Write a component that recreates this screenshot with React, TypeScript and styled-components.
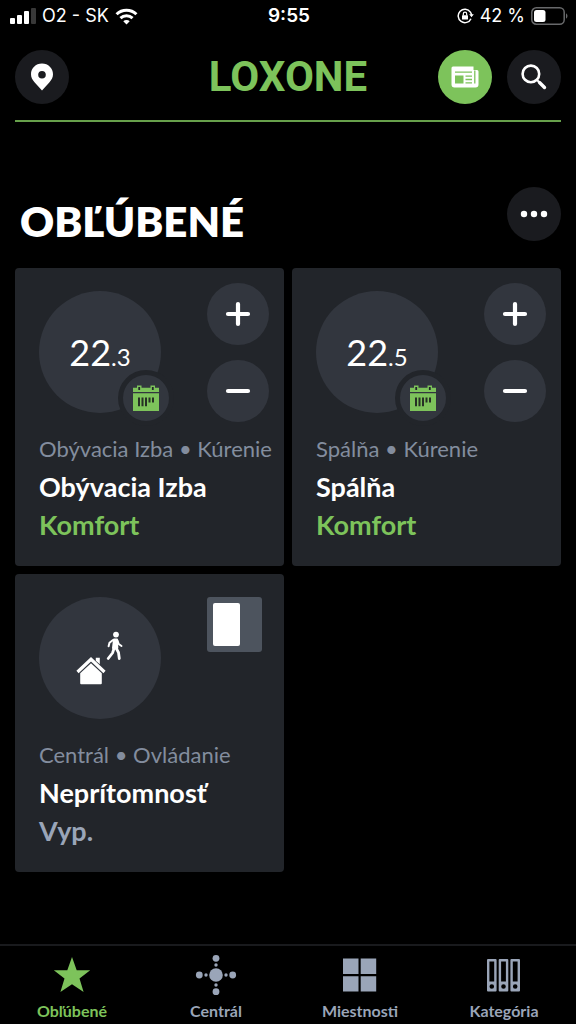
import React from "react";
import styled, { createGlobalStyle } from "styled-components";

const green = "#7dc35b";
const slate = "#9aa5b8";

const GlobalStyle = createGlobalStyle`
  * { box-sizing: border-box; }
  body { margin: 0; background: #000; color: #fff; font-family: Lato, "Open Sans", sans-serif; }
  button { border: 0; padding: 0; font: inherit; color: inherit; cursor: pointer; }
  svg { display: block; flex: none; }
  h1, h2, p { margin: 0; }
`;

const Screen = styled.div`
  min-height: 100vh;
  display: flex;
  flex-direction: column;
`;

const StatusBar = styled.div`
  display: grid;
  grid-template-columns: 1fr auto 1fr;
  align-items: center;
  height: 32px;
  padding: 0 8px 0 10px;
  font-family: Inter, sans-serif;
  font-size: 18px;
  line-height: 24px;
`;

const StatusGroup = styled.div<{ $end?: boolean }>`
  display: flex;
  align-items: center;
  gap: 6px;
  white-space: nowrap;
  justify-content: ${(p) => (p.$end ? "flex-end" : "flex-start")};
`;

const Clock = styled.time`
  font-size: 19px;
  font-weight: 600;
`;

const Header = styled.header`
  display: grid;
  grid-template-columns: 1fr auto 1fr;
  align-items: center;
  margin: 18px 15px 0;
  padding-bottom: 16px;
  border-bottom: 2px solid #67a04b;
`;

const HeaderActions = styled.div`
  display: flex;
  justify-content: flex-end;
  gap: 15px;
`;

const Logo = styled.a`
  color: ${green};
  font-family: "Liberation Sans Narrow", Roboto, sans-serif;
  font-size: 42px;
  font-weight: 700;
  line-height: 54px;
  text-decoration: none;
`;

const RoundButton = styled.button<{ $size: number; $tone: string }>`
  display: flex;
  align-items: center;
  justify-content: center;
  flex: none;
  width: ${(p) => p.$size}px;
  height: ${(p) => p.$size}px;
  border-radius: 50%;
  background: ${(p) => p.$tone};
`;

const Main = styled.main`
  flex: 1;
  padding: 65px 15px 24px;
`;

const TitleRow = styled.div`
  display: flex;
  justify-content: space-between;
  padding-left: 5px;
  margin-bottom: 24px;
`;

const Title = styled.h1`
  padding-top: 11px;
  font-size: 42px;
  font-weight: 800;
  line-height: 46px;
`;

const Cards = styled.div`
  display: grid;
  grid-template-columns: repeat(2, minmax(0, 1fr));
  gap: 8px;
`;

const Card = styled.article`
  padding: 15px 0 22px 24px;
  border-radius: 4px;
  background: #22252a;
`;

const CardTop = styled.div`
  display: flex;
  justify-content: space-between;
  height: 147px;
  padding-right: 15px;
`;

const Dial = styled.div`
  position: relative;
  display: flex;
  align-items: center;
  justify-content: center;
  width: 122px;
  height: 122px;
  margin-top: 8px;
  border-radius: 50%;
  background: #32363e;
`;

const Reading = styled.span`
  padding-top: 4px;
  font-size: 36px;
  line-height: 44px;
`;

const Fraction = styled.span`
  font-size: 24px;
`;

const Badge = styled.span`
  position: absolute;
  right: -13px;
  bottom: -13px;
  display: flex;
  align-items: center;
  justify-content: center;
  width: 56px;
  height: 56px;
  border: 5px solid #22252a;
  border-radius: 50%;
  background: #32363e;
`;

const Stepper = styled.div`
  display: flex;
  flex-direction: column;
  gap: 15px;
`;

const Switch = styled.input`
  appearance: none;
  width: 55px;
  height: 55px;
  margin: 8px 7px 0 0;
  padding: 6px;
  border-radius: 3px;
  background: #4d545e;
  cursor: pointer;

  &::before {
    content: "";
    display: block;
    width: 27px;
    height: 43px;
    border-radius: 2px;
    background: #fff;
  }

  &:checked::before {
    margin-left: auto;
  }
`;

const Place = styled.p`
  color: #838d9e;
  font-size: 22px;
  line-height: 38px;
  white-space: nowrap;
`;

const Name = styled.h2`
  font-size: 27px;
  font-weight: 700;
  line-height: 38px;
`;

const State = styled.p<{ $active?: boolean }>`
  color: ${(p) => (p.$active ? green : slate)};
  font-size: 27px;
  font-weight: 700;
  line-height: 38px;
`;

const TabBar = styled.nav`
  display: grid;
  grid-template-columns: repeat(4, 1fr);
  height: 80px;
  border-top: 2px solid #191a1d;
`;

const Tab = styled.a<{ $active?: boolean }>`
  display: flex;
  flex-direction: column;
  align-items: center;
  gap: 5px;
  padding-top: 8px;
  color: ${(p) => (p.$active ? green : slate)};
  font-size: 16px;
  font-weight: 700;
  line-height: 20px;
  text-decoration: none;
`;

const SignalIcon = () => (
  <svg width="26" height="16" viewBox="0 0 26 16" fill="#fff" aria-hidden="true">
    <rect y="10" width="5" height="6" rx="1" />
    <rect x="7" y="7" width="5" height="9" rx="1" />
    <rect x="14" y="3" width="5" height="13" rx="1" />
    <rect x="21" width="5" height="16" rx="1" opacity=".22" />
  </svg>
);

const WifiIcon = () => (
  <svg width="23" height="17" viewBox="0 0 24 18" fill="none" stroke="#fff" strokeWidth="3.2" aria-hidden="true">
    <path d="M1.500 6.600a15 15 0 0 1 21 0" />
    <path d="M5.600 10.700a9.200 9.200 0 0 1 12.800 0" />
    <path d="M12 17.400 8.600 14a4.800 4.800 0 0 1 6.800 0z" fill="#fff" stroke="none" />
  </svg>
);

const RotationLockIcon = () => (
  <svg width="17" height="16" viewBox="0 0 17 16" fill="none" stroke="#fff" strokeWidth="1.5" aria-hidden="true">
    <path d="M13.4 4.1A6.700 6.700 0 1 0 14 10.700M14.600 7.500A6.700 6.700 0 0 0 13.400 4.100" />
    <path d="M12.200 6.200h4.600l-2.300 3z" fill="#fff" stroke="none" />
    <rect x="5" y="7.200" width="6" height="4.400" rx=".6" fill="#fff" stroke="none" />
    <path d="M6.300 7.400V5.900a1.700 1.700 0 0 1 3.400 0v1.500" strokeWidth="1.200" />
  </svg>
);

const BatteryIcon = () => (
  <svg width="37" height="18" viewBox="0 0 37 18" aria-hidden="true">
    <rect x=".8" y=".8" width="32.400" height="16.400" rx="4.500" fill="none" stroke="#68696b" strokeWidth="1.500" />
    <rect x="3" y="3" width="11.500" height="12" rx="2.500" fill="#fff" />
    <path d="M35 6.300a3.200 3.200 0 0 1 0 5.400z" fill="#68696b" />
  </svg>
);

const PinIcon = () => (
  <svg width="24" height="28" viewBox="0 0 24 28" aria-hidden="true">
    <path fillRule="evenodd" fill="#fff" d="M12 .5C5.700.5 1 5.300 1 11.300c0 3.200 1.300 5.400 3.500 8L12 27.500l7.500-8.200c2.200-2.600 3.500-4.800 3.500-8C23 5.300 18.300.5 12 .5zm0 7.500a3.800 3.800 0 1 1 0 7.600 3.800 3.800 0 0 1 0-7.600z" />
  </svg>
);

const NewsIcon = () => (
  <svg width="28" height="22" viewBox="0 0 28 22" aria-hidden="true">
    <path fill="#fff" d="M2 .5h20.500V4H26a1.500 1.500 0 0 1 1.500 1.500V18.500a3 3 0 0 1-3 3H3.500a3 3 0 0 1-3-3V2A1.500 1.500 0 0 1 2 .5z" />
    <path d="M4 6.200h17M14.500 10.200h6.500M14.500 13.500h6.500M14.500 16.800h6.500M23.800 4.500v13" stroke={green} strokeWidth="1.300" />
    <rect x="4" y="9.500" width="8.500" height="8" fill={green} />
  </svg>
);

const SearchIcon = () => (
  <svg width="26" height="26" viewBox="0 0 26 26" fill="none" stroke="#fff" strokeLinecap="round" aria-hidden="true">
    <circle cx="9.900" cy="9.900" r="8.300" strokeWidth="2.600" />
    <path d="m16 16 1.800 1.800" strokeWidth="2" />
    <path d="m18.500 18.500 5 5" strokeWidth="3.400" />
  </svg>
);

const MoreIcon = () => (
  <svg width="28" height="8" viewBox="0 0 28 8" fill="#fff" aria-hidden="true">
    <circle cx="4" cy="4" r="3.200" />
    <circle cx="14" cy="4" r="3.200" />
    <circle cx="24" cy="4" r="3.200" />
  </svg>
);

const PlusIcon = () => (
  <svg width="26" height="26" viewBox="0 0 26 26" stroke="#fff" strokeWidth="4.200" strokeLinecap="round" aria-hidden="true">
    <path d="M3 13h20M13 3v20" />
  </svg>
);

const MinusIcon = () => (
  <svg width="26" height="26" viewBox="0 0 26 26" stroke="#fff" strokeWidth="4.200" strokeLinecap="round" aria-hidden="true">
    <path d="M3 13h20" />
  </svg>
);

const CalendarIcon = () => (
  <svg width="26" height="26" viewBox="0 0 26 26" aria-hidden="true">
    <path fill={green} d="M0 2.800h4V.5h4.500v2.300h9V.5H22v2.300h4V7H0zM0 8.200h26V26H0z" />
    <path d="M6.200 2v3M19.800 2v3" stroke="#22252a" strokeWidth="1.800" />
    <path d="M6 12.500v8.800M9.500 12.500v8.800M13 12.500v8.800M16.500 12.500v5M20 12.500v5" stroke="#263025" strokeWidth="2" />
  </svg>
);

const LeavingHomeIcon = () => (
  <svg width="48" height="54" viewBox="0 0 48 54" fill="none" stroke="#fff" strokeLinecap="round" strokeLinejoin="round" aria-hidden="true">
    <path d="M1.500 41 15 28.300 28.500 41" strokeWidth="3.200" strokeLinejoin="miter" strokeLinecap="butt" />
    <path d="M4.200 42.300 15 32.200l10.800 10.100v10a.9.900 0 0 1-.9.900H5.100a.9.900 0 0 1-.9-.9z" fill="#fff" stroke="none" />
    <path d="M19.800 26.800h4v6.500l-4-3.600z" fill="#fff" stroke="none" />
    <circle cx="40" cy="3.600" r="2.900" fill="#fff" stroke="none" />
    <path d="M38 8.500 41 8.500 41.300 17 37 17z" fill="#fff" strokeWidth="2" />
    <path d="M37 9 33.500 11.700 32.600 15.300M41.500 9.500 42.700 13 45.500 15" strokeWidth="2" />
    <path d="M38 17.500 36.500 22 32.200 27.500M40.300 17.500 42.500 21.500 43.300 27.500" strokeWidth="2.800" />
  </svg>
);

const StarIcon = () => (
  <svg width="42" height="42" viewBox="0 0 42 42" fill="currentColor" aria-hidden="true">
    <path d="m21 3 4.700 13.200h13.500L28.500 24.600l4.100 13.500L21 30.200 9.400 38.100l4.100-13.500L2.800 16.200h13.500z" />
  </svg>
);

const CentralIcon = () => (
  <svg width="42" height="42" viewBox="0 0 42 42" fill="currentColor" aria-hidden="true">
    <circle cx="21" cy="21" r="6.800" />
    {[0, 90, 180, 270].map((angle) => (
      <g key={angle} transform={`rotate(${angle} 21 21)`}>
        <circle cx="21" cy="4.300" r="3.400" />
        <circle cx="21" cy="11" r="1.700" />
      </g>
    ))}
  </svg>
);

const RoomsIcon = () => (
  <svg width="42" height="42" viewBox="0 0 42 42" fill="currentColor" aria-hidden="true">
    <path d="M4 4.500h15.500V20H4zM21.700 4.500h15.500V20H21.700zM4 22.200h15.500V37.500H4zM21.700 22.200h15.500V37.500H21.700z" />
  </svg>
);

const CategoryIcon = () => (
  <svg width="42" height="42" viewBox="0 0 42 42" fill="currentColor" fillRule="evenodd" aria-hidden="true">
    {[4, 15.700, 27.400].map((x) => (
      <path
        key={x}
        transform={`translate(${x} 5)`}
        d="M1 0h7.600a1 1 0 0 1 1 1v30.500a1 1 0 0 1-1 1H1a1 1 0 0 1-1-1V1a1 1 0 0 1 1-1zM2.400 2.600v20h4.800v-20zM4.800 25.200a2.300 2.300 0 1 0 0 4.600 2.300 2.300 0 0 0 0-4.600z"
      />
    ))}
  </svg>
);

const heaters = [
  { room: "Obývacia Izba", whole: "22", fraction: ".3" },
  { room: "Spálňa", whole: "22", fraction: ".5" },
];

const tabs = [
  { label: "Obľúbené", Icon: StarIcon },
  { label: "Centrál", Icon: CentralIcon },
  { label: "Miestnosti", Icon: RoomsIcon },
  { label: "Kategória", Icon: CategoryIcon },
];

export default function App() {
  return (
    <Screen>
      <GlobalStyle />
      <StatusBar>
        <StatusGroup>
          <SignalIcon />
          <span>O2 - SK</span>
          <WifiIcon />
        </StatusGroup>
        <Clock>9:55</Clock>
        <StatusGroup $end>
          <RotationLockIcon />
          <span>42 %</span>
          <BatteryIcon />
        </StatusGroup>
      </StatusBar>

      <Header>
        <RoundButton $size={54} $tone="#1a1b1f" aria-label="Miesto">
          <PinIcon />
        </RoundButton>
        <Logo href="#">LOXONE</Logo>
        <HeaderActions>
          <RoundButton $size={54} $tone={green} aria-label="Novinky">
            <NewsIcon />
          </RoundButton>
          <RoundButton $size={54} $tone="#1a1b1f" aria-label="Hľadať">
            <SearchIcon />
          </RoundButton>
        </HeaderActions>
      </Header>

      <Main>
        <TitleRow>
          <Title>OBĽÚBENÉ</Title>
          <RoundButton $size={54} $tone="#1a1b1f" aria-label="Viac">
            <MoreIcon />
          </RoundButton>
        </TitleRow>

        <Cards>
          {heaters.map(({ room, whole, fraction }) => (
            <Card key={room}>
              <CardTop>
                <Dial>
                  <Reading>
                    {whole}
                    <Fraction>{fraction}</Fraction>
                  </Reading>
                  <Badge>
                    <CalendarIcon />
                  </Badge>
                </Dial>
                <Stepper>
                  <RoundButton $size={62} $tone="#32363e" aria-label="Zvýšiť">
                    <PlusIcon />
                  </RoundButton>
                  <RoundButton $size={62} $tone="#32363e" aria-label="Znížiť">
                    <MinusIcon />
                  </RoundButton>
                </Stepper>
              </CardTop>
              <Place>{room} • Kúrenie</Place>
              <Name>{room}</Name>
              <State $active>Komfort</State>
            </Card>
          ))}
          <Card>
            <CardTop>
              <Dial>
                <LeavingHomeIcon />
              </Dial>
              <Switch type="checkbox" role="switch" aria-label="Neprítomnosť" />
            </CardTop>
            <Place>Centrál • Ovládanie</Place>
            <Name>Neprítomnosť</Name>
            <State>Vyp.</State>
          </Card>
        </Cards>
      </Main>

      <TabBar>
        {tabs.map(({ label, Icon }, index) => (
          <Tab key={label} href="#" $active={index === 0}>
            <Icon />
            {label}
          </Tab>
        ))}
      </TabBar>
    </Screen>
  );
}
